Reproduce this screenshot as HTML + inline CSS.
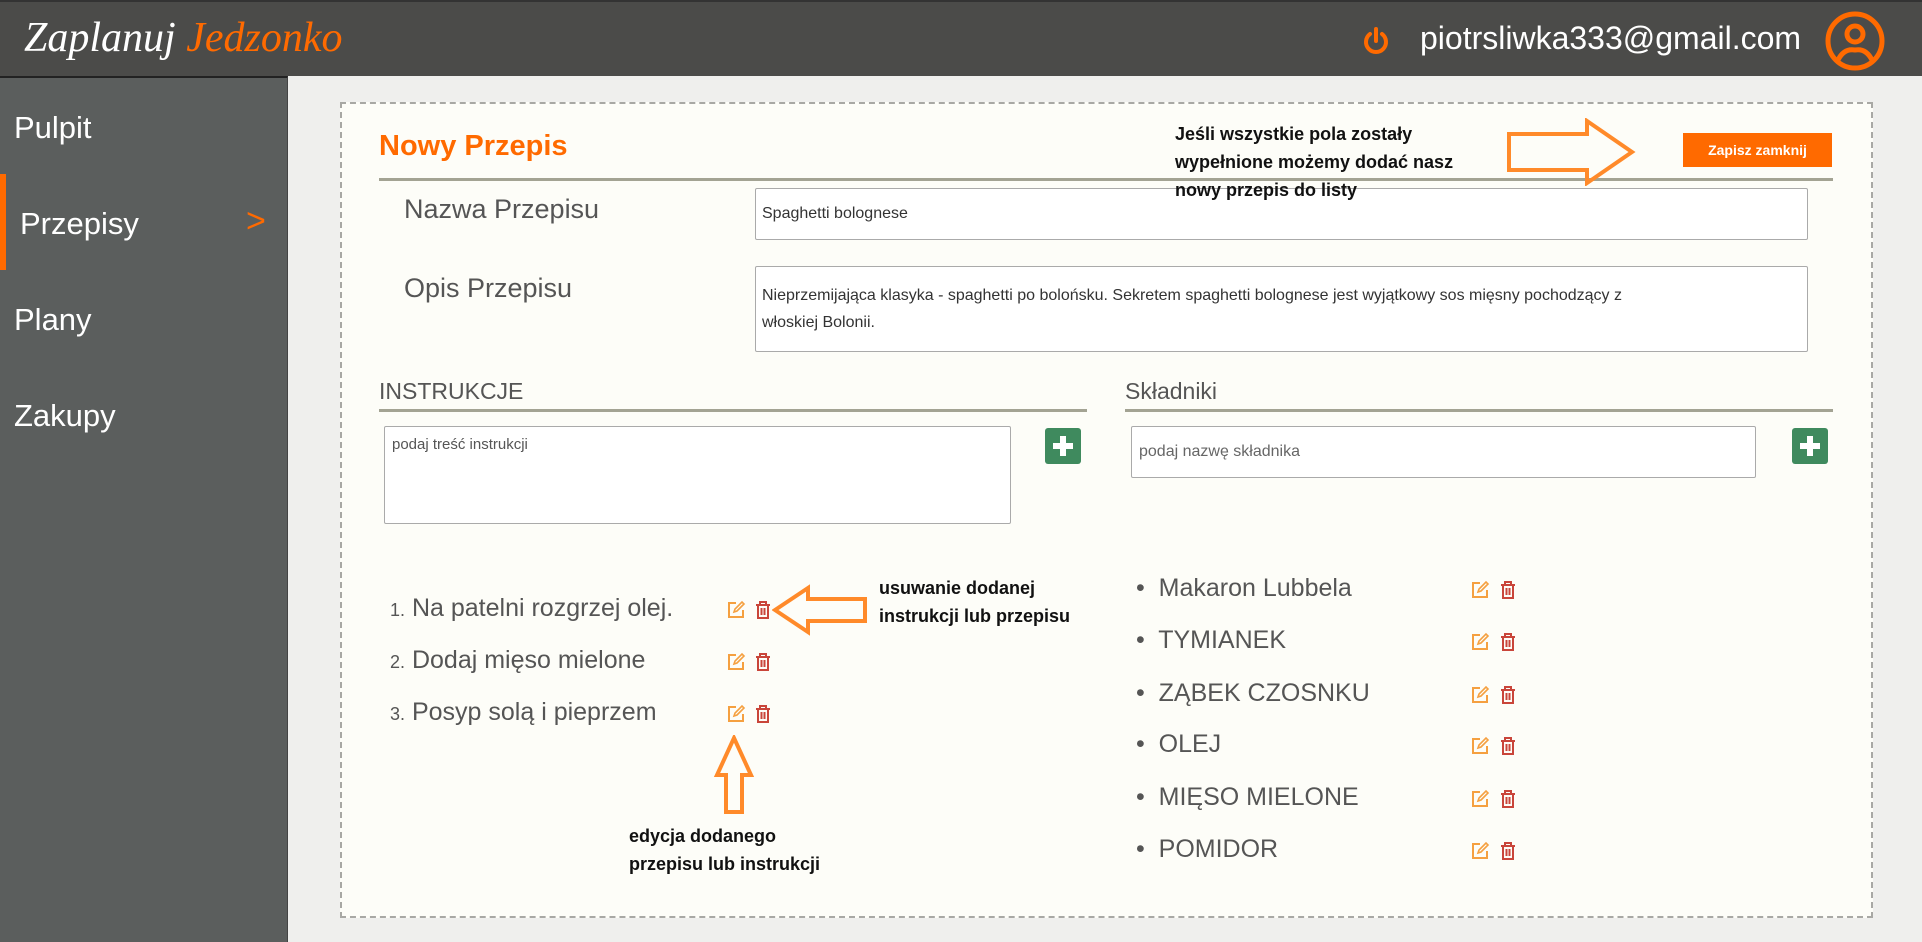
<!DOCTYPE html>
<html><head><meta charset="utf-8"><style>
*{box-sizing:border-box;margin:0;padding:0}
body{width:1922px;height:942px;overflow:hidden;background:#efefed;font-family:"Liberation Sans",sans-serif;position:relative}
.a{position:absolute;white-space:nowrap}
#hdr{left:0;top:0;width:1922px;height:76px;background:#4b4b49;border-top:2px solid #333}
#side{left:0;top:76px;width:288px;height:866px;background:#5b5e5d;border-top:2px solid #222;border-right:1px solid #444}
.nav{color:#fff;font-size:31px;left:14px}
#panel{left:340px;top:102px;width:1533px;height:816px;background:#fdfdf8;border:2px dashed #a8a8a4}
.lbl{color:#555;font-size:27px}
.box{background:#fff;border:1px solid #aaa;border-radius:2px}
.sec{color:#555;font-size:23px}
.line{height:3px;background:#a3a393}
.plus{width:36px;height:36px;background:#3f8a5e;border-radius:3px}
.plus:before{content:"";position:absolute;left:8px;top:15px;width:20px;height:6px;background:#fff}
.plus:after{content:"";position:absolute;left:15px;top:8px;width:6px;height:20px;background:#fff}
.li{color:#555;font-size:25px}
.ann{color:#111;font-weight:bold;font-size:18px}
</style></head><body>
<div id="hdr" class="a">
 <div class="a" style="left:24px;top:12px;font-family:'Liberation Serif',serif;font-style:italic;font-size:42px;color:#fff">Zaplanuj <span style="color:#ff6a00">Jedzonko</span></div>
 <svg class="a" style="left:1362px;top:24px" width="28" height="30" viewBox="0 0 28 30"><path d="M8 8 A10 10 0 1 0 20 8" fill="none" stroke="#ff6a00" stroke-width="4" stroke-linecap="round"/><line x1="14" y1="3" x2="14" y2="15" stroke="#ff6a00" stroke-width="4" stroke-linecap="round"/></svg>
 <div class="a" style="left:1420px;top:18px;color:#fff;font-size:32px">piotrsliwka333@gmail.com</div>
 <svg class="a" style="left:1824px;top:8px" width="62" height="62" viewBox="0 0 62 62"><circle cx="31" cy="31" r="27" fill="none" stroke="#ff6a00" stroke-width="5"/><circle cx="31" cy="24" r="8" fill="none" stroke="#ff6a00" stroke-width="5"/><path d="M14 50 Q20 38 31 40 Q42 38 48 50" fill="none" stroke="#ff6a00" stroke-width="5"/></svg>
</div>
<div id="side" class="a">
 <div class="a nav" style="top:32px">Pulpit</div>
 <div class="a" style="left:0;top:96px;width:6px;height:96px;background:#ff6a00"></div>
 <div class="a nav" style="left:20px;top:128px">Przepisy</div>
 <div class="a" style="left:246px;top:124px;color:#ff6a00;font-size:34px">&gt;</div>
 <div class="a nav" style="top:224px">Plany</div>
 <div class="a nav" style="top:320px">Zakupy</div>
</div>
<div id="panel" class="a"></div>
<div class="a" style="left:379px;top:130px;color:#ff6a00;font-size:29px;font-weight:bold">Nowy Przepis</div>
<div class="a line" style="left:379px;top:178px;width:1454px"></div>
<div class="a" style="left:1683px;top:133px;width:149px;height:34px;background:#ff6a00;color:#fff;font-weight:bold;font-size:14px;text-align:center;line-height:34px">Zapisz zamknij</div>
<svg class="a" style="left:1505px;top:118px" width="200" height="68" viewBox="0 0 200 68"><path d="M4 16 H82 V3 L127 34 L82 65 V52 H4 Z" fill="none" stroke="#ff8a2a" stroke-width="4"/></svg>
<div class="a lbl" style="left:404px;top:194px">Nazwa Przepisu</div>
<div class="a box" style="left:755px;top:188px;width:1053px;height:52px"></div>
<div class="a" style="left:762px;top:205px;font-size:16px;color:#333">Spaghetti bolognese</div>
<div class="a lbl" style="left:404px;top:273px">Opis Przepisu</div>
<div class="a box" style="left:755px;top:266px;width:1053px;height:86px"></div>
<div class="a" style="left:762px;top:282px;font-size:16px;color:#333;line-height:27px;white-space:normal;width:900px">Nieprzemijająca klasyka - spaghetti po bolońsku. Sekretem spaghetti bolognese jest wyjątkowy sos mięsny pochodzący z włoskiej Bolonii.</div>
<div class="a sec" style="left:379px;top:378px">INSTRUKCJE</div>
<div class="a line" style="left:379px;top:409px;width:708px"></div>
<div class="a sec" style="left:1125px;top:378px">Składniki</div>
<div class="a line" style="left:1125px;top:409px;width:708px"></div>
<div class="a box" style="left:384px;top:426px;width:627px;height:98px"></div>
<div class="a" style="left:392px;top:436px;font-size:15px;color:#555">podaj treść instrukcji</div>
<div class="a plus" style="left:1045px;top:428px"></div>
<div class="a box" style="left:1131px;top:426px;width:625px;height:52px"></div>
<div class="a" style="left:1139px;top:443px;font-size:16px;color:#666">podaj nazwę składnika</div>
<div class="a plus" style="left:1792px;top:428px"></div>

<div class="a li" style="left:390px;top:594px"><span style="font-size:18px">1.</span> Na patelni rozgrzej olej.</div>
<div class="a li" style="left:390px;top:646px"><span style="font-size:18px">2.</span> Dodaj mięso mielone</div>
<div class="a li" style="left:390px;top:698px"><span style="font-size:18px">3.</span> Posyp solą i pieprzem</div>

<div class="a li" style="left:1136px;top:574px">•&nbsp; Makaron Lubbela</div>
<div class="a li" style="left:1136px;top:626px">•&nbsp; TYMIANEK</div>
<div class="a li" style="left:1136px;top:679px">•&nbsp; ZĄBEK CZOSNKU</div>
<div class="a li" style="left:1136px;top:730px">•&nbsp; OLEJ</div>
<div class="a li" style="left:1136px;top:783px">•&nbsp; MIĘSO MIELONE</div>
<div class="a li" style="left:1136px;top:835px">•&nbsp; POMIDOR</div>

<svg width="0" height="0" style="position:absolute"><defs>
<g id="ed"><path d="M10 3 H3 V17 H17 V10" fill="none" stroke="#f5a040" stroke-width="2"/><path d="M8 12 L9 9 L16 2 L18 4 L11 11 Z" fill="none" stroke="#f5a040" stroke-width="1.6"/></g>
<g id="tr"><path d="M3 5 H17 M7 5 V2 H13 V5 M5 5 V18 H15 V5 M8.5 8 V15 M11.5 8 V15" fill="none" stroke="#c9453a" stroke-width="2"/></g>
</defs></svg>
<svg class="a" style="left:726px;top:600px" width="20" height="20"><use href="#ed"/></svg>
<svg class="a" style="left:753px;top:600px" width="20" height="20"><use href="#tr"/></svg>
<svg class="a" style="left:726px;top:652px" width="20" height="20"><use href="#ed"/></svg>
<svg class="a" style="left:753px;top:652px" width="20" height="20"><use href="#tr"/></svg>
<svg class="a" style="left:726px;top:704px" width="20" height="20"><use href="#ed"/></svg>
<svg class="a" style="left:753px;top:704px" width="20" height="20"><use href="#tr"/></svg>
<svg class="a" style="left:1470px;top:580px" width="20" height="20"><use href="#ed"/></svg>
<svg class="a" style="left:1498px;top:580px" width="20" height="20"><use href="#tr"/></svg>
<svg class="a" style="left:1470px;top:632px" width="20" height="20"><use href="#ed"/></svg>
<svg class="a" style="left:1498px;top:632px" width="20" height="20"><use href="#tr"/></svg>
<svg class="a" style="left:1470px;top:685px" width="20" height="20"><use href="#ed"/></svg>
<svg class="a" style="left:1498px;top:685px" width="20" height="20"><use href="#tr"/></svg>
<svg class="a" style="left:1470px;top:736px" width="20" height="20"><use href="#ed"/></svg>
<svg class="a" style="left:1498px;top:736px" width="20" height="20"><use href="#tr"/></svg>
<svg class="a" style="left:1470px;top:789px" width="20" height="20"><use href="#ed"/></svg>
<svg class="a" style="left:1498px;top:789px" width="20" height="20"><use href="#tr"/></svg>
<svg class="a" style="left:1470px;top:841px" width="20" height="20"><use href="#ed"/></svg>
<svg class="a" style="left:1498px;top:841px" width="20" height="20"><use href="#tr"/></svg>

<svg class="a" style="left:772px;top:584px" width="96" height="52" viewBox="0 0 96 52"><path d="M3 26 L36 4 V15 H93 V37 H36 V48 Z" fill="none" stroke="#ff8a2a" stroke-width="4"/></svg>
<div class="a ann" style="left:879px;top:574px;line-height:28px">usuwanie dodanej<br>instrukcji lub przepisu</div>
<svg class="a" style="left:713px;top:735px" width="42" height="80" viewBox="0 0 42 80"><path d="M21 3 L38 40 H29 V77 H13 V40 H4 Z" fill="none" stroke="#ff8a2a" stroke-width="4"/></svg>
<div class="a ann" style="left:629px;top:822px;line-height:28px">edycja dodanego<br>przepisu lub instrukcji</div>
<div class="a ann" style="left:1175px;top:120px;line-height:28px;white-space:normal;width:330px">Jeśli wszystkie pola zostały<br>wypełnione możemy dodać nasz<br>nowy przepis do listy</div>
</body></html>
